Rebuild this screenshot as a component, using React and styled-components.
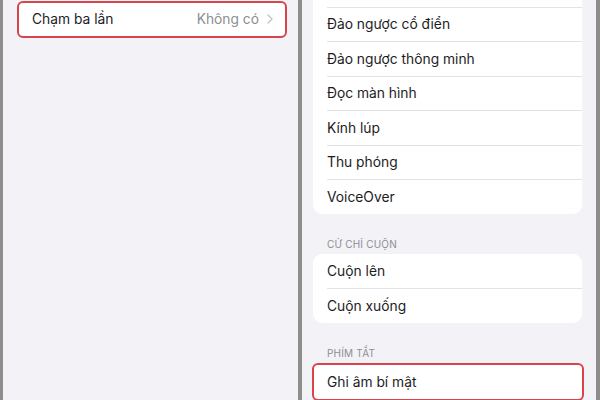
import styled, { createGlobalStyle } from 'styled-components';

const Global = createGlobalStyle`
    html, body {
        margin: 0;
        padding: 0;
    }
    body {
        font-family: Inter, "Noto Sans", "Liberation Sans", sans-serif;
        -webkit-font-smoothing: antialiased;
    }
`;

const Stage = styled.div`
    width: 600px;
    height: 400px;
    overflow: hidden;
    display: flex;
    background-color: #8f8d8c;
`;

const Frame = styled.div`
    width: ${props => props.w}px;
    flex-shrink: 0;
    background-color: #8f8d8c;
`;

const Screen = styled.div`
    width: ${props => props.w}px;
    flex-shrink: 0;
    box-sizing: border-box;
    padding: ${props => props.pad};
    background-color: #f2f2f7;
    display: flex;
    flex-direction: column;
`;

const Card = styled.div`
    background-color: #ffffff;
    box-sizing: border-box;
    margin-top: ${props => props.top || 0}px;
    border: ${props => props.marked ? '2px solid #d8444c' : 'none'};
    margin-left: ${props => props.marked ? '-1px' : '0'};
    margin-right: ${props => props.marked ? '-2px' : '0'};
    border-radius: ${props => props.marked ? '6px' : '9px'};
`;

const Row = styled.div`
    height: 34.5px;
    box-sizing: border-box;
    display: flex;
    align-items: center;
    justify-content: space-between;
    margin-left: 14px;
    padding-right: 12px;
    font-size: 13.8px;
    color: #1c1c1e;
    border-top: ${props => props.first ? 'none' : '1px solid #e3e3e7'};
`;

const Value = styled.span`
    display: flex;
    align-items: center;
    gap: 8px;
    color: #8e8e93;
`;

const Header = styled.div`
    margin: 23px 0 3px 14px;
    font-size: 10px;
    line-height: 14px;
    letter-spacing: 0.2px;
    color: #8e8e93;
`;

const Chevron = () => (
    <svg width="6" height="10" viewBox="0 0 6 10">
        <path d="M1 1l4 4-4 4" fill="none" stroke="#c4c4c8" strokeWidth="1.4" strokeLinecap="round" strokeLinejoin="round" />
    </svg>
);

const features = [
    '',
    'Đảo ngược cổ điển',
    'Đảo ngược thông minh',
    'Đọc màn hình',
    'Kính lúp',
    'Thu phóng',
    'VoiceOver',
];

const scroll = ['Cuộn lên', 'Cuộn xuống'];

export default function App() {
    return (
        <Stage>
            <Global />
            <Frame w={3} />
            <Screen w={295} pad="1px 13px 0 15px">
                <Card marked>
                    <Row first style={{ height: 32.5, marginLeft: 13 }}>
                        <span>Chạm ba lần</span>
                        <Value>Không có <Chevron /></Value>
                    </Row>
                </Card>
            </Screen>
            <Frame w={4} />
            <Screen w={294} pad="0 14px 0 11px">
                <Card top={-28}>
                    {features.map((name, i) => (
                        <Row key={i} first={i === 0}>{name}</Row>
                    ))}
                </Card>
                <Header>CỬ CHỈ CUỘN</Header>
                <Card>
                    {scroll.map((name, i) => (
                        <Row key={name} first={i === 0}>{name}</Row>
                    ))}
                </Card>
                <Header>PHÍM TẮT</Header>
                <Card marked>
                    <Row first style={{ marginLeft: 13 }}>Ghi âm bí mật</Row>
                </Card>
            </Screen>
            <Frame w={4} />
        </Stage>
    );
}
